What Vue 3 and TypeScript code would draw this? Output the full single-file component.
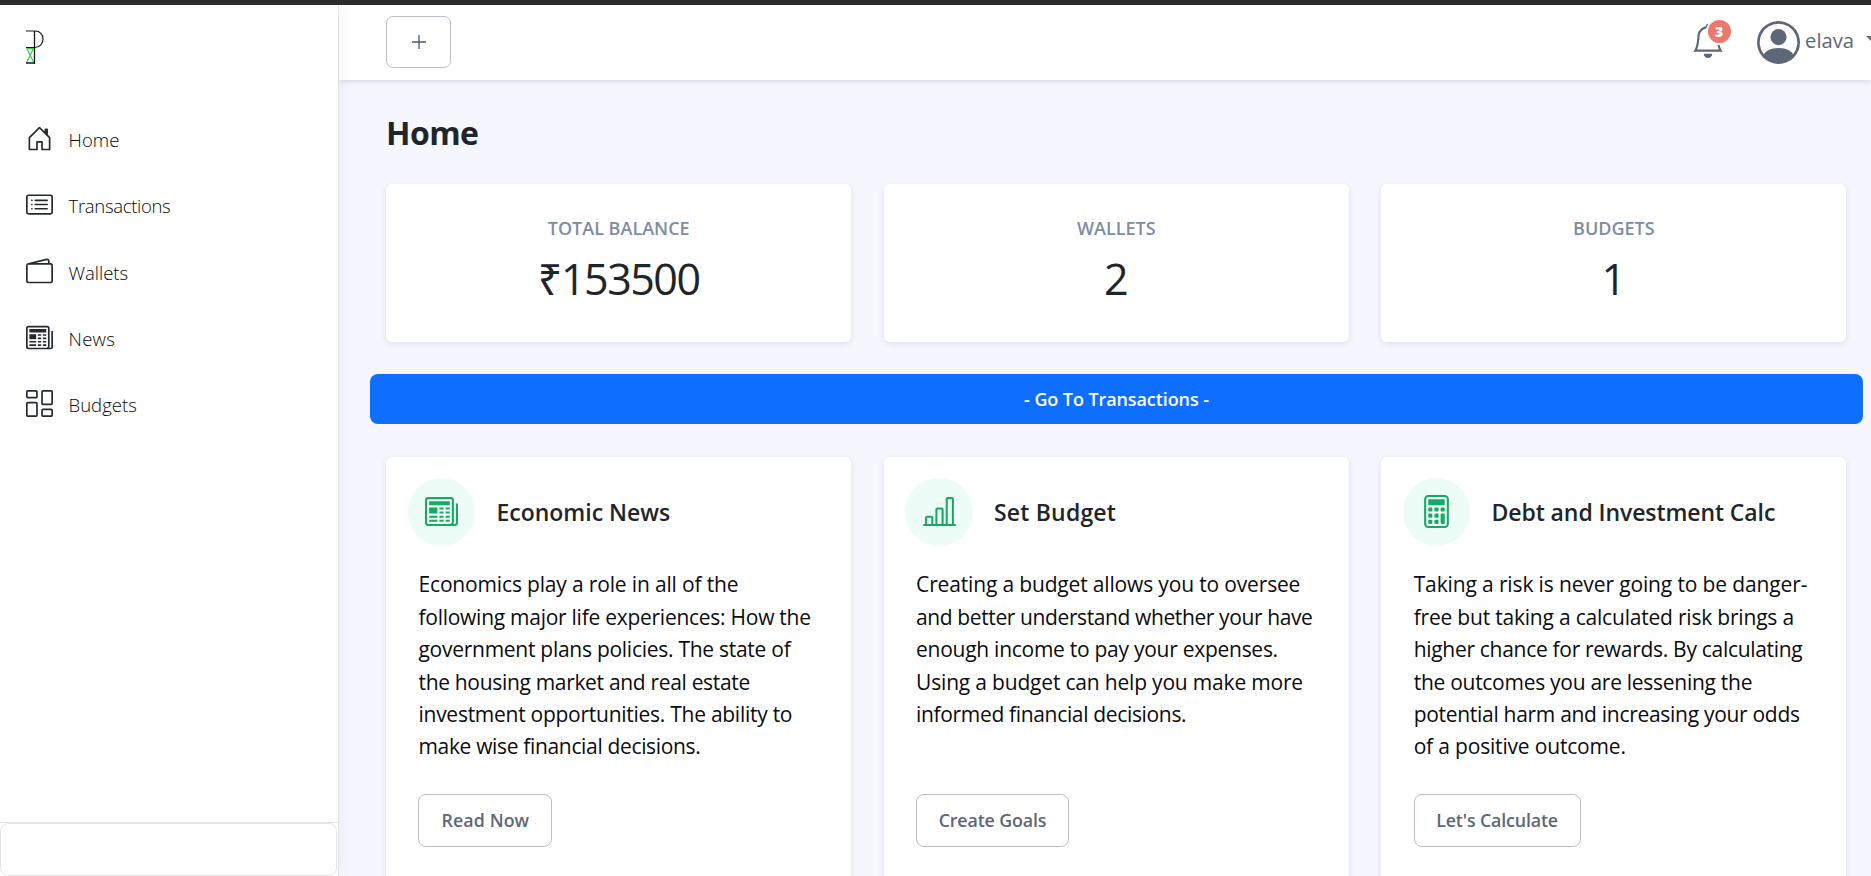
<script setup lang="ts">
interface NavItem { label: string; icon: string; tracking: number }
interface Stat { label: string; value: string; tracking: number }
interface Line { text: string; tracking: number }
interface Feature {
  title: string
  titleTracking: number
  icon: string
  lines: Line[]
  action: string
  actionTracking: number
  actionWidth: number
}

const icons: Record<string, string[]> = {
  house: [
    'M8.354 1.146a.5.5 0 0 0-.708 0l-6 6A.5.5 0 0 0 1.5 7.5v7a.5.5 0 0 0 .5.5h4.5a.5.5 0 0 0 .5-.5v-4h2v4a.5.5 0 0 0 .5.5H14a.5.5 0 0 0 .5-.5v-7a.5.5 0 0 0-.146-.354L13 5.793V2.5a.5.5 0 0 0-.5-.5h-1a.5.5 0 0 0-.5.5v1.293L8.354 1.146zM2.5 14V7.707l5.5-5.5 5.5 5.5V14H10v-4a.5.5 0 0 0-.5-.5h-3a.5.5 0 0 0-.5.5v4H2.5z',
  ],
  cardList: [
    'M14.5 3a.5.5 0 0 1 .5.5v9a.5.5 0 0 1-.5.5h-13a.5.5 0 0 1-.5-.5v-9a.5.5 0 0 1 .5-.5h13zm-13-1A1.5 1.5 0 0 0 0 3.5v9A1.5 1.5 0 0 0 1.5 14h13a1.5 1.5 0 0 0 1.5-1.5v-9A1.5 1.5 0 0 0 14.5 2h-13z',
    'M5 8a.5.5 0 0 1 .5-.5h7a.5.5 0 0 1 0 1h-7A.5.5 0 0 1 5 8zm0-2.5a.5.5 0 0 1 .5-.5h7a.5.5 0 0 1 0 1h-7a.5.5 0 0 1-.5-.5zm0 5a.5.5 0 0 1 .5-.5h7a.5.5 0 0 1 0 1h-7a.5.5 0 0 1-.5-.5zm-1-5a.5.5 0 1 1-1 0 .5.5 0 0 1 1 0zM4 8a.5.5 0 1 1-1 0 .5.5 0 0 1 1 0zm0 2.5a.5.5 0 1 1-1 0 .5.5 0 0 1 1 0z',
  ],
  wallet: [
    'M12.136.326A1.5 1.5 0 0 1 14 1.78V3h.5A1.5 1.5 0 0 1 16 4.5v9a1.5 1.5 0 0 1-1.5 1.5h-13A1.5 1.5 0 0 1 0 13.5v-9a1.5 1.5 0 0 1 1.432-1.499L12.136.326zM5.562 3H13V1.78a.5.5 0 0 0-.621-.484L5.562 3zM1.5 4a.5.5 0 0 0-.5.5v9a.5.5 0 0 0 .5.5h13a.5.5 0 0 0 .5-.5v-9a.5.5 0 0 0-.5-.5h-13z',
  ],
  newspaper: [
    'M0 2.5A1.5 1.5 0 0 1 1.5 1h11A1.5 1.5 0 0 1 14 2.5v10.528c0 .3-.05.654-.238.972h.738a.5.5 0 0 0 .5-.5v-9a.5.5 0 0 1 1 0v9a1.5 1.5 0 0 1-1.5 1.5H1.497A1.497 1.497 0 0 1 0 13.5v-11zM12 14c.37 0 .654-.211.853-.441.092-.106.147-.279.147-.531V2.5a.5.5 0 0 0-.5-.5h-11a.5.5 0 0 0-.5.5v11c0 .278.223.5.497.5H12z',
    'M2 3h10v2H2V3zm0 3h4v3H2V6zm0 4h4v1H2v-1zm0 2h4v1H2v-1zm5-6h2v1H7V6zm3 0h2v1h-2V6zM7 8h2v1H7V8zm3 0h2v1h-2V8zm-3 2h2v1H7v-1zm3 0h2v1h-2v-1zm-3 2h2v1H7v-1zm3 0h2v1h-2v-1z',
  ],
  columns: [
    'M6 1v3H1V1h5zM1 0a1 1 0 0 0-1 1v3a1 1 0 0 0 1 1h5a1 1 0 0 0 1-1V1a1 1 0 0 0-1-1H1zm14 12v3h-5v-3h5zm-5-1a1 1 0 0 0-1 1v3a1 1 0 0 0 1 1h5a1 1 0 0 0 1-1v-3a1 1 0 0 0-1-1h-5zM6 8v7H1V8h5zM1 7a1 1 0 0 0-1 1v7a1 1 0 0 0 1 1h5a1 1 0 0 0 1-1V8a1 1 0 0 0-1-1H1zm14-6v7h-5V1h5zm-5-1a1 1 0 0 0-1 1v7a1 1 0 0 0 1 1h5a1 1 0 0 0 1-1V1a1 1 0 0 0-1-1h-5z',
  ],
  chart: [
    'M11 2a1 1 0 0 1 1-1h2a1 1 0 0 1 1 1v12h.5a.5.5 0 0 1 0 1H.5a.5.5 0 0 1 0-1H1v-3a1 1 0 0 1 1-1h2a1 1 0 0 1 1 1v3h1V7a1 1 0 0 1 1-1h2a1 1 0 0 1 1 1v7h1V2zm1 12h2V2h-2v12zm-3 0V7H7v7h2zm-5 0v-3H2v3h2z',
  ],
  calculator: [
    'M12 1a1 1 0 0 1 1 1v12a1 1 0 0 1-1 1H4a1 1 0 0 1-1-1V2a1 1 0 0 1 1-1h8zM4 0a2 2 0 0 0-2 2v12a2 2 0 0 0 2 2h8a2 2 0 0 0 2-2V2a2 2 0 0 0-2-2H4z',
    'M4 2.5a.5.5 0 0 1 .5-.5h7a.5.5 0 0 1 .5.5v2a.5.5 0 0 1-.5.5h-7a.5.5 0 0 1-.5-.5v-2zm0 4a.5.5 0 0 1 .5-.5h1a.5.5 0 0 1 .5.5v1a.5.5 0 0 1-.5.5h-1a.5.5 0 0 1-.5-.5v-1zm0 3a.5.5 0 0 1 .5-.5h1a.5.5 0 0 1 .5.5v1a.5.5 0 0 1-.5.5h-1a.5.5 0 0 1-.5-.5v-1zm0 3a.5.5 0 0 1 .5-.5h1a.5.5 0 0 1 .5.5v1a.5.5 0 0 1-.5.5h-1a.5.5 0 0 1-.5-.5v-1zm3-6a.5.5 0 0 1 .5-.5h1a.5.5 0 0 1 .5.5v1a.5.5 0 0 1-.5.5h-1a.5.5 0 0 1-.5-.5v-1zm0 3a.5.5 0 0 1 .5-.5h1a.5.5 0 0 1 .5.5v1a.5.5 0 0 1-.5.5h-1a.5.5 0 0 1-.5-.5v-1zm0 3a.5.5 0 0 1 .5-.5h1a.5.5 0 0 1 .5.5v1a.5.5 0 0 1-.5.5h-1a.5.5 0 0 1-.5-.5v-1zm3-6a.5.5 0 0 1 .5-.5h1a.5.5 0 0 1 .5.5v1a.5.5 0 0 1-.5.5h-1a.5.5 0 0 1-.5-.5v-1zm0 3a.5.5 0 0 1 .5-.5h1a.5.5 0 0 1 .5.5v4a.5.5 0 0 1-.5.5h-1a.5.5 0 0 1-.5-.5v-4z',
  ],
}

const nav: NavItem[] = [
  { label: 'Home', icon: 'house', tracking: 0.07 },
  { label: 'Transactions', icon: 'cardList', tracking: -0.31 },
  { label: 'Wallets', icon: 'wallet', tracking: 0 },
  { label: 'News', icon: 'newspaper', tracking: 0.3 },
  { label: 'Budgets', icon: 'columns', tracking: 0.05 },
]

const stats: Stat[] = [
  { label: 'TOTAL BALANCE', value: '₹153500', tracking: -1.49 },
  { label: 'WALLETS', value: '2', tracking: 0 },
  { label: 'BUDGETS', value: '1', tracking: 0 },
]

const features: Feature[] = [
  {
    title: 'Economic News',
    titleTracking: 0,
    icon: 'newspaper',
    lines: [
      { text: 'Economics play a role in all of the', tracking: -0.16 },
      { text: 'following major life experiences: How the', tracking: -0.264 },
      { text: 'government plans policies. The state of', tracking: -0.27 },
      { text: 'the housing market and real estate', tracking: -0.321 },
      { text: 'investment opportunities. The ability to', tracking: -0.265 },
      { text: 'make wise financial decisions.', tracking: -0.34 },
    ],
    action: 'Read Now',
    actionTracking: 0.1,
    actionWidth: 134,
  },
  {
    title: 'Set Budget',
    titleTracking: 0.2,
    icon: 'chart',
    lines: [
      { text: 'Creating a budget allows you to oversee', tracking: -0.16 },
      { text: 'and better understand whether your have', tracking: -0.391 },
      { text: 'enough income to pay your expenses.', tracking: -0.27 },
      { text: 'Using a budget can help you make more', tracking: -0.188 },
      { text: 'informed financial decisions.', tracking: -0.336 },
    ],
    action: 'Create Goals',
    actionTracking: -0.12,
    actionWidth: 153,
  },
  {
    title: 'Debt and Investment Calc',
    titleTracking: -0.09,
    icon: 'calculator',
    lines: [
      { text: 'Taking a risk is never going to be danger-', tracking: -0.134 },
      { text: 'free but taking a calculated risk brings a', tracking: -0.204 },
      { text: 'higher chance for rewards. By calculating', tracking: -0.3 },
      { text: 'the outcomes you are lessening the', tracking: -0.278 },
      { text: 'potential harm and increasing your odds', tracking: -0.294 },
      { text: 'of a positive outcome.', tracking: -0.18 },
    ],
    action: "Let's Calculate",
    actionTracking: -0.14,
    actionWidth: 167,
  },
]

const spacing = (v: number) => ({ letterSpacing: `${v}px` })
</script>

<template>
  <div class="page">
    <div class="strip"></div>
    <div class="shell">
      <aside class="sidebar">
        <svg class="logo" viewBox="0 0 18 34" fill="none">
          <path d="M.8 18.6H8M.8 18.6L7.6 32M7.6 18.6L.8 32" stroke="#2fd04f" stroke-width="1.2" />
          <path d="M0 1H9C14 1 17 4.5 17 9S14 17.5 9 17.5H0" stroke="#17191c" stroke-width="1.2" />
          <path d="M8.5 1V34M0 33H9" stroke="#17191c" stroke-width="1.3" />
        </svg>
        <nav class="nav">
          <a v-for="item in nav" :key="item.label" class="nav-item">
            <svg class="nav-icon" viewBox="0 0 16 16">
              <path v-for="d in icons[item.icon]" :key="d" :d="d" />
            </svg>
            <span class="nav-label" :style="spacing(item.tracking)">{{ item.label }}</span>
          </a>
        </nav>
        <div class="side-foot"><div class="foot-box"></div></div>
      </aside>
      <div class="body">
        <header class="topbar">
          <button class="add" aria-label="Add">
            <svg viewBox="0 0 14 14"><path d="M7 0V14M0 7H14" /></svg>
          </button>
          <div class="bell">
            <svg viewBox="0 0 16 16">
              <path d="M8 16a2 2 0 0 0 2-2H6a2 2 0 0 0 2 2zM8 1.918l-.797.161A4.002 4.002 0 0 0 4 6c0 .628-.134 2.197-.459 3.742-.16.767-.376 1.566-.663 2.258h10.244c-.287-.692-.502-1.49-.663-2.258C12.134 8.197 12 6.628 12 6a4.002 4.002 0 0 0-3.203-3.92L8 1.917zM14.22 12c.223.447.481.801.78 1H1c.299-.199.557-.553.78-1C2.68 10.2 3 6.88 3 6c0-2.42 1.72-4.44 4.005-4.901a1 1 0 1 1 1.99 0A5.002 5.002 0 0 1 13 6c0 .88.32 4.2 1.22 6z" />
            </svg>
            <span class="badge">3</span>
          </div>
          <div class="user">
            <svg viewBox="0 0 16 16">
              <path d="M11 6a3 3 0 1 1-6 0 3 3 0 0 1 6 0z" />
              <path fill-rule="evenodd" d="M0 8a8 8 0 1 1 16 0A8 8 0 0 1 0 8zm8-7a7 7 0 0 0-5.468 11.37C3.242 11.226 4.805 10 8 10s4.757 1.225 5.468 2.37A7 7 0 0 0 8 1z" />
            </svg>
            <span class="user-name">elava</span>
            <span class="caret"></span>
          </div>
        </header>
        <main class="content">
          <h1>Home</h1>
          <section class="grid">
            <article v-for="s in stats" :key="s.label" class="card stat">
              <span class="stat-label">{{ s.label }}</span>
              <span class="stat-value" :style="spacing(s.tracking)">{{ s.value }}</span>
            </article>
          </section>
          <button class="go">- Go To Transactions -</button>
          <section class="grid">
            <article v-for="f in features" :key="f.title" class="card feature">
              <div class="feature-head">
                <span class="disc">
                  <svg viewBox="0 0 16 16"><path v-for="d in icons[f.icon]" :key="d" :d="d" /></svg>
                </span>
                <h2 :style="spacing(f.titleTracking)">{{ f.title }}</h2>
              </div>
              <p class="copy">
                <span v-for="l in f.lines" :key="l.text" class="line" :style="spacing(l.tracking)">{{ l.text }}</span>
              </p>
              <button class="action" :style="{ width: `${f.actionWidth}px`, ...spacing(f.actionTracking) }">{{ f.action }}</button>
            </article>
          </section>
        </main>
      </div>
    </div>
  </div>
</template>

<style>
body { margin: 0; overflow: hidden; }
</style>

<style scoped>
* { box-sizing: border-box; }
.page {
  width: 1871px;
  height: 876px;
  overflow: hidden;
  display: flex;
  flex-direction: column;
  background: #f5f6ff;
  color: #212529;
  font-family: "Open Sans", "Noto Sans", sans-serif;
}
.strip { height: 5px; flex: none; background: #2c2c2c; }
.shell { flex: 1; min-height: 0; display: flex; }
.sidebar {
  position: relative;
  z-index: 2;
  width: 339px;
  flex: none;
  display: flex;
  flex-direction: column;
  background: #fff;
  border-right: 1px solid #e1e2e8;
  box-shadow: 2px 0 16px rgba(30, 34, 60, 0.05);
  clip-path: inset(0 -20px 0 0);
}
.logo { width: 18px; height: 34px; margin: 25px 0 0 26px; }
.nav { margin-top: 41.6px; display: flex; flex-direction: column; }
.nav-item { height: 66.2px; padding-left: 26px; display: flex; align-items: center; }
.nav-icon { width: 27px; height: 27px; fill: #252932; }
.nav-label {
  margin-left: 15.5px;
  padding-top: 3.2px;
  font-size: 18.5px;
  line-height: 26px;
  font-weight: 300;
  color: #07080c;
}
.side-foot { margin-top: auto; height: 54px; border-top: 1px solid #e3e4ea; }
.foot-box { width: 337px; height: 53px; border: 1px solid #e5e6ec; border-radius: 8px; }
.body { flex: 1; min-width: 0; display: flex; flex-direction: column; }
.topbar {
  position: relative;
  z-index: 1;
  height: 75px;
  flex: none;
  display: flex;
  padding-left: 47px;
  background: #fff;
  box-shadow: 0 2px 5px rgba(30, 34, 60, 0.12);
}
.add {
  flex: none;
  width: 65px;
  height: 52px;
  margin-top: 11px;
  padding: 0 0 1px;
  display: flex;
  align-items: center;
  justify-content: center;
  border: 1px solid #b9bec9;
  border-radius: 7px;
  background: #fff;
}
.add svg { width: 14px; height: 14px; stroke: #4f5868; stroke-width: 1.3; }
.bell { position: relative; width: 34px; height: 34px; margin: 19px 0 0 1239.6px; flex: none; }
.bell svg { display: block; width: 34px; height: 34px; fill: #5d6778; }
.badge {
  position: absolute;
  left: 15px;
  top: -6px;
  width: 27px;
  height: 27px;
  border: 2px solid #fff;
  border-radius: 50%;
  background: #ed786d;
  color: #fff;
  font-size: 14px;
  line-height: 23px;
  font-weight: 800;
  text-align: center;
}
.user { display: flex; flex: none; margin: 16px 0 0 32px; height: 43px; }
.user svg { width: 43px; height: 43px; fill: #5d6778; }
.user-name {
  margin: 4px 0 0 5.5px;
  width: 50px;
  font-size: 20.2px;
  line-height: 30px;
  color: #5d6778;
}
.caret {
  margin: 15px 0 0 11px;
  height: 0;
  border: 6.5px solid transparent;
  border-top-color: #5d6778;
  border-bottom: 0;
}
.content { padding: 33.3px 24px 0 47.2px; display: flex; flex-direction: column; }
h1 {
  margin: 0 0 30.7px -0.2px;
  font-size: 32px;
  line-height: 40px;
  font-weight: 700;
  letter-spacing: -0.57px;
}
.grid { display: grid; grid-template-columns: repeat(3, 465px); column-gap: 32.6px; }
.card {
  background: #fff;
  border-radius: 6px;
  box-shadow: 0 2px 6px rgba(30, 34, 60, 0.1);
}
.stat { height: 158px; padding-top: 32px; display: flex; flex-direction: column; align-items: center; }
.stat-label { font-size: 18px; line-height: 24px; font-weight: 600; color: #7e8da3; }
.stat-value { margin-top: 13.3px; font-size: 43px; line-height: 52px; font-weight: 400; }
.go {
  width: 1493px;
  height: 50px;
  margin: 32px 0 33px -16.2px;
  padding: 0;
  border: 0;
  border-radius: 8px;
  background: #0d6eff;
  color: #fff;
  font-family: inherit;
  font-size: 18px;
  font-weight: 600;
  letter-spacing: -0.09px;
}
.feature { height: 460px; padding: 21px 21.5px 0; }
.feature-head { display: flex; align-items: center; height: 68px; }
.disc {
  width: 67.5px;
  height: 68px;
  display: flex;
  align-items: center;
  justify-content: center;
  border-radius: 50%;
  background: #edfcf6;
}
.disc svg { width: 33px; height: 33px; fill: #19a866; margin-bottom: 1px; }
h2 { margin: 0 0 0 21.2px; font-size: 23px; line-height: 32px; font-weight: 600; }
.copy { margin: 22.3px 0 0 10.8px; height: 194.4px; color: #0b0c0f; font-size: 21px; line-height: 32.4px; }
.line { display: block; white-space: nowrap; }
.action {
  display: block;
  height: 53px;
  margin: 31.4px 0 0 10.7px;
  padding: 0 0 2px;
  border: 1px solid #b9bec9;
  border-radius: 8px;
  background: #fff;
  color: #5d6778;
  font-family: inherit;
  font-size: 17.8px;
  font-weight: 600;
}
</style>
